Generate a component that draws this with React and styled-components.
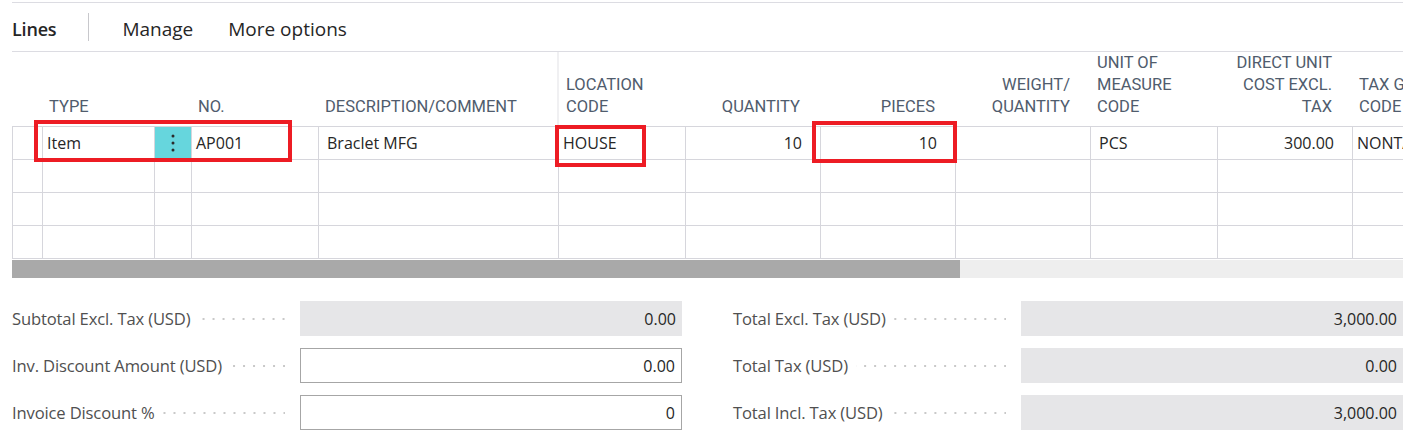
import React from "react";
import styled, { createGlobalStyle } from "styled-components";

const GlobalStyle = createGlobalStyle`
  html, body { margin: 0; padding: 0; background: #ffffff; }
  body { font-family: "Open Sans", "Noto Sans", sans-serif; color: #212121; }
  * { box-sizing: border-box; }
`;

const Page = styled.div`
  width: 1403px;
  padding: 2px 0 0 12px;
`;

const Toolbar = styled.div`
  display: flex;
  align-items: center;
  height: 50px;
  padding-top: 3px;
  border-top: 1px solid #dcdce2;
  border-bottom: 1px solid #dcdce2;
  font-size: 19px;
  color: #262626;
`;

const ToolTitle = styled.span`
  font-weight: 600;
  font-size: 18px;
  letter-spacing: -0.2px;
`;

const ToolSep = styled.span`
  width: 1px;
  height: 28px;
  background: #c8c8cc;
  margin: -3px 33px 0 32px;
`;

const ToolItem = styled.span`
  margin-right: 35px;
`;

const GridWrap = styled.div`
  position: relative;
  overflow: hidden;
  width: 1391px;
`;

const COLS = "30px 112px 37px 127px 240px 127px 135px 135px 135px 127px 135px 140px";

const HeaderRow = styled.div`
  display: grid;
  grid-template-columns: ${COLS};
  height: 74px;
`;

const HeadCell = styled.div`
  display: flex;
  align-items: flex-end;
  justify-content: ${(p) => (p.$right ? "flex-end" : "flex-start")};
  text-align: ${(p) => (p.$right ? "right" : "left")};
  padding: 0 ${(p) => (p.$right ? "20px" : "0")} 10px ${(p) => (p.$right ? "0" : "7px")};
  font-family: Roboto, "Noto Sans", sans-serif;
  font-size: 16.5px;
  line-height: 22px;
  color: #505c6d;
  white-space: nowrap;
  border-left: ${(p) => (p.$frozen ? "2px solid #f0f0f2" : "none")};
  margin-left: ${(p) => (p.$frozen ? "-1px" : "0")};
`;

const Body = styled.div`
  border-top: 1px solid #d6d6dc;
  border-left: 1px solid #d6d6dc;
`;

const Row = styled.div`
  display: grid;
  grid-template-columns: ${COLS};
  height: 33px;
  border-bottom: 1px solid #d6d6dc;
`;

const Cell = styled.div`
  display: flex;
  align-items: center;
  justify-content: ${(p) => (p.$right ? "flex-end" : "flex-start")};
  padding: 0 ${(p) => (p.$right ? "18px" : "0")} 0 ${(p) => (p.$right ? "0" : p.$pad || "8px")};
  border-right: 1px solid #d6d6dc;
  font-size: 16px;
  color: #262626;
  white-space: nowrap;
  overflow: hidden;
  background: ${(p) => (p.$accent ? "#66d6dd" : "transparent")};
`;

const EllipsisCell = styled(Cell)`
  justify-content: center;
  padding: 0;
`;

const Scrollbar = styled.div`
  height: 18px;
  margin-top: 1px;
  background: #eeeeee;
  display: flex;
`;

const Thumb = styled.div`
  width: 948px;
  background: #a9a9a9;
`;

const Highlight = styled.div`
  position: absolute;
  border: 4px solid #ed1c24;
  pointer-events: none;
`;

const Totals = styled.div`
  display: grid;
  grid-template-columns: 670px 670px;
  column-gap: 51px;
  row-gap: 12px;
  margin-top: 23px;
`;

const Field = styled.div`
  display: grid;
  grid-template-columns: 288px 1fr;
  height: 35px;
  align-items: center;
`;

const Label = styled.div`
  display: flex;
  align-items: center;
  padding-right: 15px;
  font-size: 16.6px;
  letter-spacing: -0.15px;
  color: #505050;
  white-space: nowrap;
`;

const Leader = styled.span`
  flex: 1;
  height: 2px;
  margin-left: 8px;
  background-image: linear-gradient(to left, #c9c9c9 2px, transparent 2px);
  background-size: 10px 2px;
  background-repeat: repeat-x;
  background-position: right center;
`;

const Value = styled.div`
  height: 35px;
  display: flex;
  align-items: center;
  justify-content: flex-end;
  padding-right: 6px;
  font-size: 16px;
  color: #262626;
  background: ${(p) => (p.$editable ? "#ffffff" : "#e6e6e8")};
  border: ${(p) => (p.$editable ? "1px solid #a6a6a6" : "none")};
`;

const VDots = () => (
  <svg width="4" height="18" viewBox="0 0 4 18">
    <circle cx="2" cy="2" r="1.5" fill="#2b2b2b" />
    <circle cx="2" cy="9" r="1.5" fill="#2b2b2b" />
    <circle cx="2" cy="16" r="1.5" fill="#2b2b2b" />
  </svg>
);

const headers = [
  { t: "" },
  { t: "TYPE" },
  { t: "" },
  { t: "NO." },
  { t: "DESCRIPTION/COMMENT" },
  { t: ["LOCATION", "CODE"], frozen: true },
  { t: "QUANTITY", right: true },
  { t: "PIECES", right: true },
  { t: ["WEIGHT/", "QUANTITY"], right: true },
  { t: ["UNIT OF", "MEASURE", "CODE"] },
  { t: ["DIRECT UNIT", "COST EXCL.", "TAX"], right: true },
  { t: ["TAX GROUP", "CODE"] },
];

const rightCols = [6, 7, 8, 10];

const firstRow = ["", "Item", null, "AP001", "Braclet MFG", "HOUSE", "10", "10", "", "PCS", "300.00", "NONTAXABLE"];
const inputCols = { 1: "4px", 3: "4px", 5: "4px", 11: "4px" };

const totalsLeft = [
  { l: "Subtotal Excl. Tax (USD)", v: "0.00" },
  { l: "Inv. Discount Amount (USD)", v: "0.00", e: true },
  { l: "Invoice Discount %", v: "0", e: true },
];
const totalsRight = [
  { l: "Total Excl. Tax (USD)", v: "3,000.00" },
  { l: "Total Tax (USD)", v: "0.00" },
  { l: "Total Incl. Tax (USD)", v: "3,000.00" },
];

const renderHead = (t) =>
  Array.isArray(t) ? (
    <span>
      {t.map((line, i) => (
        <React.Fragment key={i}>
          {line}
          {i < t.length - 1 && <br />}
        </React.Fragment>
      ))}
    </span>
  ) : (
    <span>{t}</span>
  );

export default function App() {
  const interleaved = [];
  for (let i = 0; i < 3; i++) {
    interleaved.push(totalsLeft[i], totalsRight[i]);
  }
  return (
    <Page>
      <GlobalStyle />
      <Toolbar>
        <ToolTitle>Lines</ToolTitle>
        <ToolSep />
        <ToolItem>Manage</ToolItem>
        <ToolItem>More options</ToolItem>
      </Toolbar>
      <GridWrap>
        <HeaderRow>
          {headers.map((h, i) => (
            <HeadCell key={i} $right={h.right} $frozen={h.frozen}>
              {renderHead(h.t)}
            </HeadCell>
          ))}
        </HeaderRow>
        <Body>
          <Row>
            {firstRow.map((v, i) =>
              i === 2 ? (
                <EllipsisCell key={i} $accent>
                  <VDots />
                </EllipsisCell>
              ) : (
                <Cell key={i} $right={rightCols.includes(i)} $pad={inputCols[i]}>
                  {v}
                </Cell>
              )
            )}
          </Row>
          {[0, 1, 2].map((r) => (
            <Row key={r}>
              {firstRow.map((_, i) => (
                <Cell key={i} />
              ))}
            </Row>
          ))}
        </Body>
        <Scrollbar>
          <Thumb />
        </Scrollbar>
        <Highlight style={{ left: 22, top: 68, width: 258, height: 42 }} />
        <Highlight style={{ left: 543, top: 73, width: 91, height: 42 }} />
        <Highlight style={{ left: 800, top: 69, width: 145, height: 42 }} />
      </GridWrap>
      <Totals>
        {interleaved.map((f, i) => (
          <Field key={i}>
            <Label>
              {f.l}
              <Leader />
            </Label>
            <Value $editable={f.e}>{f.v}</Value>
          </Field>
        ))}
      </Totals>
    </Page>
  );
}
